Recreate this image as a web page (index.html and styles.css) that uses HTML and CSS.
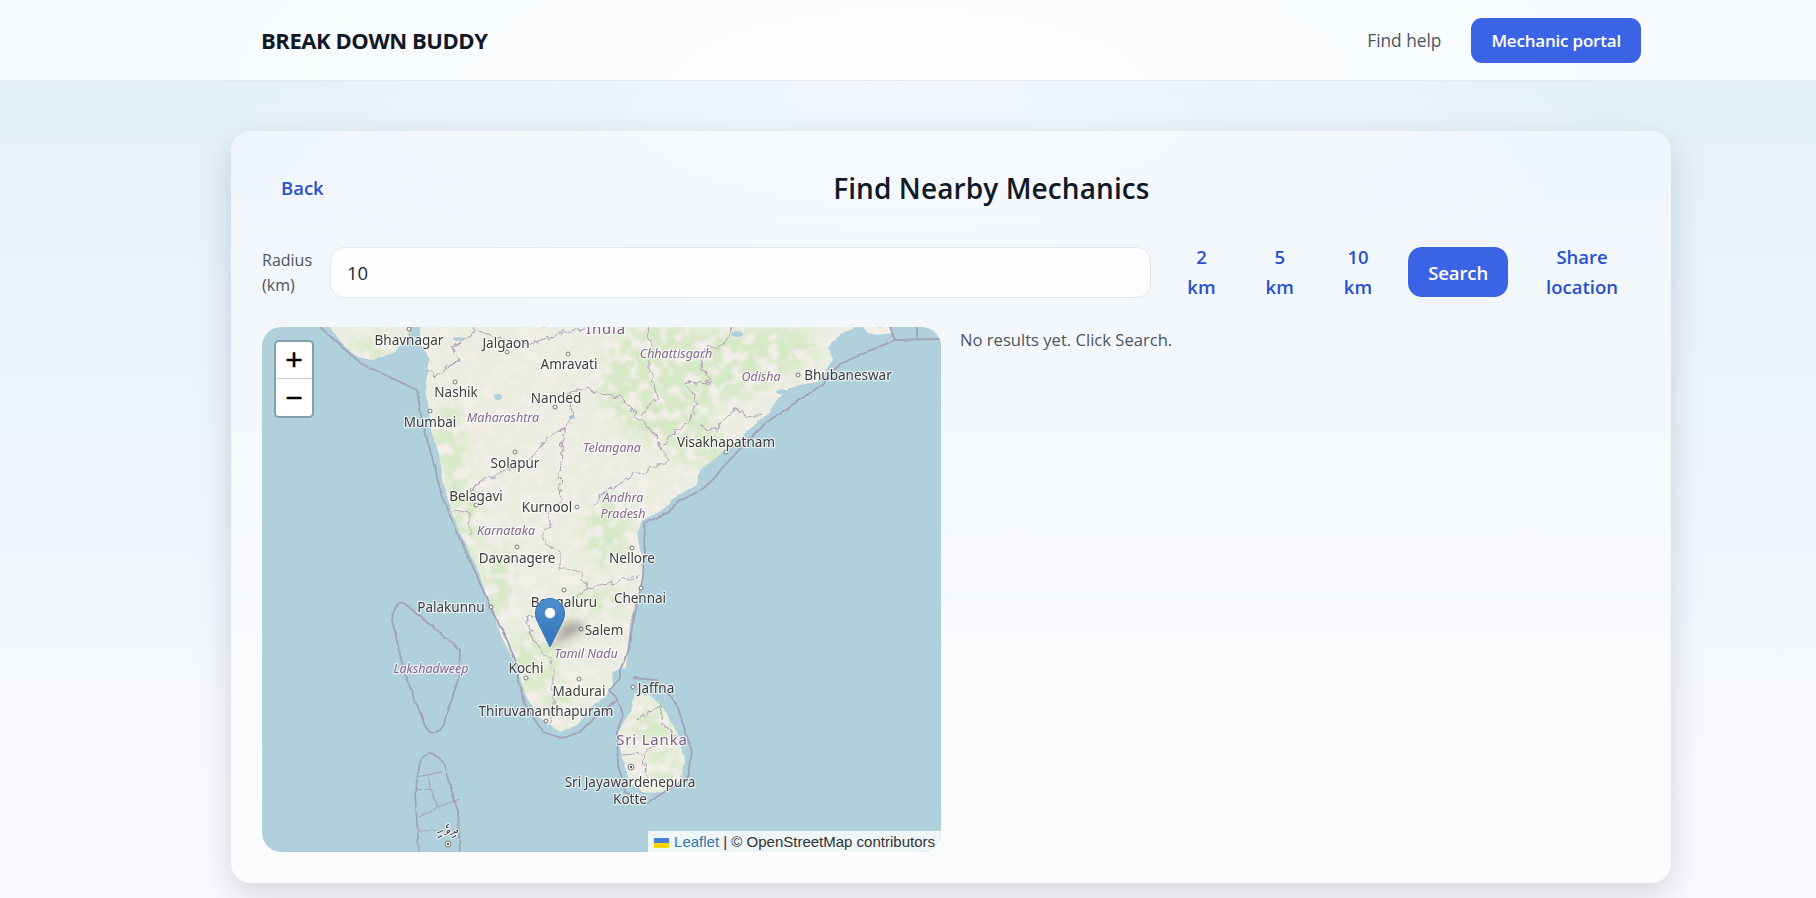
FILE: index.html
```html
<!DOCTYPE html>
<html lang="en">
<head>
    <meta charset="UTF-8">
    <meta name="viewport" content="width=device-width, initial-scale=1.0">
    <title>Break Down Buddy</title>
    <link rel="stylesheet" href="styles.css">
</head>
<body>

    <header class="topbar">
        <div class="topbar-inner">
            <a class="logo" href="#">BREAK DOWN BUDDY</a>
            <nav class="topnav">
                <a class="topnav-link" href="#">Find help</a>
                <a class="btn-primary portal" href="#">Mechanic portal</a>
            </nav>
        </div>
    </header>

    <main class="shell">
        <section class="card">
            <div class="card-head">
                <button class="btn-ghost back">Back</button>
                <h1>Find Nearby Mechanics</h1>
            </div>

            <div class="controls">
                <label class="radius-label" for="radius">Radius (km)</label>
                <input class="radius-input" id="radius" type="text" value="10">
                <div class="chips">
                    <button class="btn-ghost chip">2 km</button>
                    <button class="btn-ghost chip">5 km</button>
                    <button class="btn-ghost chip">10 km</button>
                </div>
                <button class="btn-primary search">Search</button>
                <button class="btn-ghost chip share">Share location</button>
            </div>

            <div class="content">
                <div class="map">
                    <!-- map drawn by hand, coords are px inside the 679x525 box -->
                    <svg class="map-tiles" viewBox="0 0 679 525" width="679" height="525">
                        <defs>
                            <filter id="soft" x="-10%" y="-10%" width="120%" height="120%"><feGaussianBlur stdDeviation="7"/></filter>
                            <filter id="softline"><feGaussianBlur stdDeviation="0.45"/></filter>
                            <filter id="blurtext"><feGaussianBlur stdDeviation="0.3"/></filter>
                            <filter id="wobble" x="-2%" y="-2%" width="104%" height="104%">
                                <feTurbulence type="fractalNoise" baseFrequency="0.14" numOctaves="2" seed="7"/>
                                <feDisplacementMap in="SourceGraphic" scale="9" xChannelSelector="R" yChannelSelector="G"/>
                                <feGaussianBlur stdDeviation="0.4"/>
                            </filter>
                            <filter id="wobblecoast" x="-2%" y="-2%" width="104%" height="104%">
                                <feTurbulence type="fractalNoise" baseFrequency="0.09" numOctaves="2" seed="3"/>
                                <feDisplacementMap in="SourceGraphic" scale="3" xChannelSelector="R" yChannelSelector="G"/>
                                <feGaussianBlur stdDeviation="0.45"/>
                            </filter>
                            <filter id="patchy" x="0" y="0" width="100%" height="100%">
                                <feTurbulence type="fractalNoise" baseFrequency="0.085" numOctaves="3" seed="11"/>
                                <feColorMatrix values="0 0 0 0 0.67  0 0 0 0 0.81  0 0 0 0 0.56  6 0 0 0 -2.2"/>
                                <feGaussianBlur stdDeviation="0.8"/>
                            </filter>
                            <mask id="forestmask" maskUnits="userSpaceOnUse" x="0" y="0" width="679" height="525">
                                <rect width="679" height="525" fill="#444"/>
                                <g fill="#fff" filter="url(#soft)">
                                    <ellipse cx="400" cy="55" rx="62" ry="60"/>
                                    <ellipse cx="475" cy="35" rx="50" ry="35"/>
                                    <ellipse cx="520" cy="20" rx="35" ry="22"/>
                                    <ellipse cx="440" cy="120" rx="32" ry="18"/>
                                    <ellipse cx="188" cy="125" rx="16" ry="50"/>
                                    <ellipse cx="205" cy="195" rx="14" ry="40"/>
                                    <ellipse cx="235" cy="255" rx="14" ry="36"/>
                                    <ellipse cx="270" cy="335" rx="28" ry="28"/>
                                    <ellipse cx="295" cy="372" rx="14" ry="18"/>
                                    <ellipse cx="345" cy="205" rx="24" ry="36"/>
                                    <ellipse cx="335" cy="275" rx="28" ry="12"/>
                                    <ellipse cx="392" cy="398" rx="20" ry="18"/>
                                    <ellipse cx="402" cy="440" rx="14" ry="22"/>
                                    <ellipse cx="110" cy="20" rx="18" ry="10"/>
                                </g>
                            </mask>
                            <clipPath id="landclip">
                                <path d="M68 0 L83 20 L97 30 L110 33 L133 25 L146 10 L148 0 L157 0 L160 20 L168 33 L165 50 L163 63 L167 83 L168 100 L177 127 L182 157 L186 173 L198 206 L215 240 L228 280 L241 313 L255 340 L258 352 L265 371 L278 391 L298 405 L315 398 L331 378 L345 368 L351 358 L350 345 L364 340 L366 320 L368 296 L378 270 L381 240 L375 206 L381 193 L401 183 L411 172 L435 157 L438 143 L468 120 L505 87 L515 73 L528 60 L555 55 L571 33 L566 20 L578 8 L595 0 Z"/>
                                <path d="M372 366 L388 368 L401 381 L415 405 L423 435 L418 455 L401 465 L381 466 L368 455 L360 431 L356 405 L368 385 Z"/>
                            </clipPath>
                        </defs>
                        <rect class="sea" width="679" height="525"/>

                        <g filter="url(#wobblecoast)">
                            <!-- india -->
                            <path class="land" d="M68 0 L83 20 L97 30 L110 33 L133 25 L146 10 L148 0 L157 0 L160 20 L168 33 L165 50 L163 63 L167 83 L168 100 L177 127 L182 157 L186 173 L198 206 L215 240 L228 280 L241 313 L255 340 L258 352 L265 371 L278 391 L298 405 L315 398 L331 378 L345 368 L351 358 L350 345 L364 340 L366 320 L368 296 L378 270 L381 240 L375 206 L381 193 L401 183 L411 172 L435 157 L438 143 L468 120 L505 87 L515 73 L528 60 L555 55 L571 33 L566 20 L578 8 L595 0 Z"/>
                            <path class="land" d="M601 0 L606 6 L616 8 L628 6 L630 0 Z"/>
                            <!-- sri lanka -->
                            <path class="land" d="M372 366 L388 368 L401 381 L415 405 L423 435 L418 455 L401 465 L381 466 L368 455 L360 431 L356 405 L368 385 Z"/>
                        </g>

                        <g clip-path="url(#landclip)">
                            <g mask="url(#forestmask)">
                                <rect width="679" height="525" filter="url(#patchy)"/>
                            </g>
                        </g>

                        <g class="water" filter="url(#softline)">
                            <ellipse cx="236" cy="70" rx="4" ry="3"/>
                            <ellipse cx="197" cy="12" rx="6" ry="2"/>
                            <ellipse cx="475" cy="7" rx="6" ry="3"/>
                            <ellipse cx="520" cy="65" rx="6" ry="2.5"/>
                            <ellipse cx="310" cy="90" rx="3" ry="2"/>
                        </g>

                        <g class="borders" filter="url(#wobblecoast)">
                            <!-- maritime -->
                            <path d="M58 0 L80 20 L100 37 L155 63 L160 93 L170 130 L180 170 L195 206 L208 233 L231 286 L245 313 L256 340 L256 355 L265 381 L281 405 L300 411 L318 405 L335 388 L356 373 L348 363 L358 351 L358 343 L366 325 L370 300 L381 250 L383 196 L405 186 L416 175 L441 162 L478 122 L505 95 L561 57 L578 37 L633 13 L679 12"/>
                            <path d="M628 0 L633 13 M655 0 L655 12"/>
                            <path d="M371 351 L395 353 L415 378 L430 425 L425 451 L385 476 L363 465 L356 438 L355 405 L361 388 L356 373"/>
                            <path d="M130 293 C132 280 136 274 142 276 L198 323 L197 350 L181 398 C177 408 167 409 163 398 L143 348 Z"/>
                            <path d="M157 525 L153 465 L158 435 C162 425 172 424 181 435 L196 485 L198 525"/>
                            <path class="thin" d="M155 450 L180 445 M153 463 L168 462 L167 450 M168 462 L176 480 L198 472 M157 490 L176 480 M158 504 L196 503"/>
                        </g>

                        <g class="states" filter="url(#wobble)">
                            <path d="M167 43 L173 50 L185 40 L197 33 L190 20 L210 8 L213 2 L240 12 L267 17 L297 7 L323 0"/>
                            <path d="M207 167 L217 155 L237 147 L267 133 L283 113 L302 100 L312 88 L307 67 L323 60 L338 67 L358 70 L368 80 L378 93 L395 110 L400 123 L408 133 L381 145 L371 147 L358 157 L345 163 L332 180"/>
                            <path d="M302 100 L298 147 L300 173 L286 186 L290 203 L281 203 L281 216 L298 225 L298 240 L318 246 L326 261 L351 256 L378 248"/>
                            <path d="M385 0 L388 17 L388 43 L395 70 L380 87 M425 55 L435 77 L428 93 L401 117 M425 55 L448 57 L438 37 L445 20 L461 20 L470 0"/>
                            <path d="M438 100 L455 103 L465 87 L475 82 L485 90 L501 87"/>
                            <path d="M326 261 L305 280 L265 290 L271 313 L285 330 L291 343 L291 380 L288 398"/>
                            <path d="M191 183 L208 186 L208 206"/>
                            <path d="M361 428 L381 426 L395 415 M375 391 L398 378 L401 398 L415 410 M381 426 L385 450"/>
                        </g>

                        <g class="places" filter="url(#blurtext)">
                            <circle cx="147" cy="2" r="2"/><circle cx="245" cy="25" r="2"/><circle cx="306" cy="27" r="2"/>
                            <circle cx="193" cy="55" r="2"/><circle cx="293" cy="80" r="2"/><circle cx="168" cy="84" r="2"/>
                            <circle cx="253" cy="125" r="2"/><circle cx="214" cy="178" r="2"/><circle cx="315" cy="180" r="2"/>
                            <circle cx="255" cy="220" r="2"/><circle cx="370" cy="221" r="2"/><circle cx="379" cy="261" r="2"/>
                            <circle cx="302" cy="263" r="2"/><circle cx="229" cy="280" r="2"/><circle cx="319" cy="302" r="2"/>
                            <circle cx="264" cy="351" r="2"/><circle cx="317" cy="352" r="2"/><circle cx="371" cy="360" r="2"/>
                            <circle cx="284" cy="394" r="2"/><circle cx="464" cy="125" r="2"/><circle cx="536" cy="48" r="2"/>
                            <circle cx="369" cy="440" r="3"/><circle cx="186" cy="517" r="3"/>
                        </g>
                        <g class="capitals">
                            <circle cx="369" cy="440" r="1.2"/><circle cx="186" cy="517" r="1.2"/>
                        </g>

                        <g class="city" filter="url(#blurtext)">
                            <text x="147" y="18">Bhavnagar</text>
                            <text x="244" y="21">Jalgaon</text>
                            <text x="307" y="42">Amravati</text>
                            <text x="194" y="70">Nashik</text>
                            <text x="294" y="76">Nanded</text>
                            <text x="168" y="100">Mumbai</text>
                            <text x="253" y="141">Solapur</text>
                            <text x="214" y="174">Belagavi</text>
                            <text x="586" y="53">Bhubaneswar</text>
                            <text x="464" y="120">Visakhapatnam</text>
                            <text x="285" y="185">Kurnool</text>
                            <text x="255" y="236">Davanagere</text>
                            <text x="370" y="236">Nellore</text>
                            <text x="378" y="276">Chennai</text>
                            <text x="302" y="280">Bengaluru</text>
                            <text x="189" y="285">Palakunnu</text>
                            <text x="342" y="308">Salem</text>
                            <text x="264" y="346">Kochi</text>
                            <text x="317" y="369">Madurai</text>
                            <text x="394" y="366">Jaffna</text>
                            <text x="284" y="389">Thiruvananthapuram</text>
                            <text x="368" y="460">Sri Jayawardenepura</text>
                            <text x="368" y="477">Kotte</text>
                            <text x="185" y="508">ދިވެހި</text>
                        </g>
                        <g class="region" filter="url(#blurtext)">
                            <text x="241" y="95">Maharashtra</text>
                            <text x="414" y="31">Chhattisgarh</text>
                            <text x="499" y="54">Odisha</text>
                            <text x="350" y="125">Telangana</text>
                            <text x="361" y="175">Andhra</text>
                            <text x="361" y="191">Pradesh</text>
                            <text x="244" y="208">Karnataka</text>
                            <text x="324" y="331">Tamil Nadu</text>
                            <text x="169" y="346">Lakshadweep</text>
                        </g>
                        <g class="country" filter="url(#blurtext)">
                            <text x="344" y="7">India</text>
                            <text x="390" y="418">Sri Lanka</text>
                        </g>
                    </svg>

                    <svg class="map-pin" viewBox="0 0 70 56" width="70" height="56">
                        <defs>
                            <linearGradient id="pinfill" x1="0" y1="0" x2="0" y2="1">
                                <stop offset="0" stop-color="#4d8fcc"/>
                                <stop offset="1" stop-color="#3573bd"/>
                            </linearGradient>
                            <filter id="pinshadow" x="-40%" y="-40%" width="180%" height="180%"><feGaussianBlur stdDeviation="5"/></filter>
                        </defs>
                        <path class="pin-shadow" filter="url(#pinshadow)" d="M15 49 L30 25 L46 24 L48 32 Z"/>
                        <path class="pin-body" fill="url(#pinfill)" d="M15 .5C6.9 .5 .5 7 .5 15C.5 18 1.2 20.5 2.2 23L15 49L27.8 23C28.8 20.5 29.5 18 29.5 15C29.5 7 23.1 .5 15 .5Z"/>
                        <circle class="pin-hole" cx="15" cy="15" r="5.2"/>
                    </svg>

                    <div class="zoom-box">
                        <a class="zoom-btn" href="#">+</a>
                        <a class="zoom-btn" href="#">&#x2212;</a>
                    </div>

                    <div class="attribution">
                        <svg class="flag" viewBox="0 0 15 10" width="15" height="10">
                            <rect width="15" height="5" fill="#4c7be1"/>
                            <rect y="5" width="15" height="5" fill="#ffd500"/>
                        </svg>
                        <a href="#">Leaflet</a> | &copy; OpenStreetMap contributors
                    </div>
                </div>

                <p class="no-results">No results yet. Click Search.</p>
            </div>
        </section>
    </main>

</body>
</html>
```

FILE: styles.css
```css
* {
    box-sizing: border-box;
}
html, body {
    margin: 0;
    height: 100%;
}
body {
    font-family: "Open Sans", "Noto Sans", Arial, sans-serif;
    color: #111827;
    overflow: hidden;
    background:
        radial-gradient(700px 260px at 50% 100px, rgba(244, 248, 254, 0.9), rgba(244, 248, 254, 0)),
        linear-gradient(180deg, #e3f0f8 8%, #eef4fb 45%, #f9fafd 90%);
}
a {
    text-decoration: none;
}
button {
    font-family: inherit;
    border: none;
    background: none;
    cursor: pointer;
}

/* top bar */
.topbar {
    height: 81px;
    background: rgba(255, 255, 255, 0.75);
    border-bottom: 1px solid #e5e7eb;
}
.topbar-inner {
    height: 80px;
    padding: 0 175px 0 261px;
    display: flex;
    align-items: center;
    justify-content: space-between;
}
.logo {
    font-size: 22px;
    font-weight: 700;
    letter-spacing: -0.44px;
    color: #111827;
}
.topnav {
    display: flex;
    align-items: center;
    gap: 30px;
}
.topnav-link {
    font-size: 17.3px;
    font-weight: 500;
    color: #4b5563;
}
.btn-primary {
    background: #3a63e6;
    color: #fff;
    font-weight: 600;
    border-radius: 14px;
}
.portal {
    height: 45px;
    padding: 0 20px;
    border-radius: 11px;
    font-size: 17px;
    letter-spacing: -0.2px;
    display: flex;
    align-items: center;
}

/* card */
.shell {
    padding: 50px 145px 0 231px;
}
.card {
    height: 752px;
    padding: 31px;
    border-radius: 20px;
    background: rgba(255, 255, 255, 0.38);
    box-shadow: 0 12px 34px rgba(15, 23, 42, 0.16);
}
.card-head {
    display: flex;
    align-items: center;
    height: 52px;
    margin-bottom: 18px;
}
.card-head h1 {
    flex: 1;
    margin: 0;
    text-align: center;
    font-size: 28px;
    font-weight: 600;
    letter-spacing: 0.1px;
    color: #111827;
}
.btn-ghost {
    color: #2a4fd0;
    font-size: 18.5px;
    font-weight: 600;
    line-height: 30px;
    padding: 10px 19px;
}

/* search row */
.controls {
    display: flex;
    align-items: center;
    gap: 16px;
    height: 80px;
    margin-bottom: 15px;
}
.radius-label {
    width: 52px;
    flex-shrink: 0;
    padding-top: 2px;
    font-size: 16px;
    line-height: 25px;
    color: #4b5563;
}
.radius-input {
    flex: 1;
    min-width: 0;
    height: 51px;
    padding: 0 16px;
    border: 1px solid #e5e7eb;
    border-radius: 14px;
    background: rgba(255, 255, 255, 0.72);
    font-family: inherit;
    font-size: 18.5px;
    color: #1f2937;
}
.chips {
    display: flex;
    gap: 10px;
}
.chip {
    flex-shrink: 0;
    width: min-content;
    padding: 10px 20px;
    text-align: center;
}
.share {
    padding: 10px 22px;
}
.search {
    flex-shrink: 0;
    height: 50px;
    width: 100px;
    font-size: 18.5px;
    letter-spacing: -0.1px;
}

/* map + results */
.content {
    display: grid;
    grid-template-columns: 679px 1fr;
    gap: 19px;
}
.map {
    position: relative;
    height: 525px;
    border-radius: 20px;
    overflow: hidden;
    background: #b0d0dc;
}
.map-tiles {
    display: block;
}
.sea {
    fill: #b0d0dc;
}
.land {
    fill: #f2efe9;
}
.water {
    fill: #b0d0dc;
}
.borders path {
    fill: none;
    stroke: #a3a3b8;
    stroke-width: 1.8;
}
.borders .thin {
    stroke-width: 1.2;
}
.states path {
    fill: none;
    stroke: #b3a4ba;
    stroke-width: 1.1;
}
.places circle {
    fill: #f7f5f1;
    stroke: #7a7a7a;
    stroke-width: 1;
}
.capitals circle {
    fill: #555;
}
.city text, .region text, .country text {
    text-anchor: middle;
    font-family: "Noto Sans", sans-serif;
    paint-order: stroke;
    stroke: rgba(255, 255, 255, 0.65);
    stroke-width: 2.5px;
    stroke-linejoin: round;
}
.city text {
    font-size: 13.5px;
    fill: #404040;
}
.region text {
    font-size: 12.5px;
    font-style: italic;
    fill: #87688f;
}
.country text {
    font-size: 15px;
    letter-spacing: 0.8px;
    fill: #7f5f88;
}

/* leaflet bits on top of the map */
.map-pin {
    position: absolute;
    left: 273px;
    top: 271px;
    overflow: visible;
}
.pin-shadow {
    fill: rgba(60, 55, 50, 0.42);
}
.pin-body {
    stroke: #3a78b0;
    stroke-width: 1;
}
.pin-hole {
    fill: #fff;
}
.zoom-box {
    position: absolute;
    left: 12px;
    top: 13px;
    width: 40px;
    border: 2px solid #82a0ab;
    border-radius: 5px;
    background: #fff;
}
.zoom-btn {
    display: flex;
    align-items: center;
    justify-content: center;
    height: 37px;
    font-family: "Liberation Sans", Arial, sans-serif;
    font-size: 30px;
    font-weight: 400;
    -webkit-text-stroke: 0.4px #000;
    color: #000;
}
.zoom-btn:first-child {
    border-bottom: 1px solid #ccc;
}
.attribution {
    position: absolute;
    right: 0;
    bottom: 0;
    height: 21px;
    padding: 0 6px;
    white-space: nowrap;
    font-family: "Liberation Sans", Arial, sans-serif;
    font-size: 15px;
    line-height: 21px;
    color: #333;
    background: rgba(255, 255, 255, 0.8);
}
.attribution a {
    color: #2f78b0;
}
.flag {
    margin-right: 1px;
    vertical-align: -1px;
}
.no-results {
    margin: 0;
    font-size: 16.6px;
    line-height: 26px;
    color: #4b5563;
}
```
